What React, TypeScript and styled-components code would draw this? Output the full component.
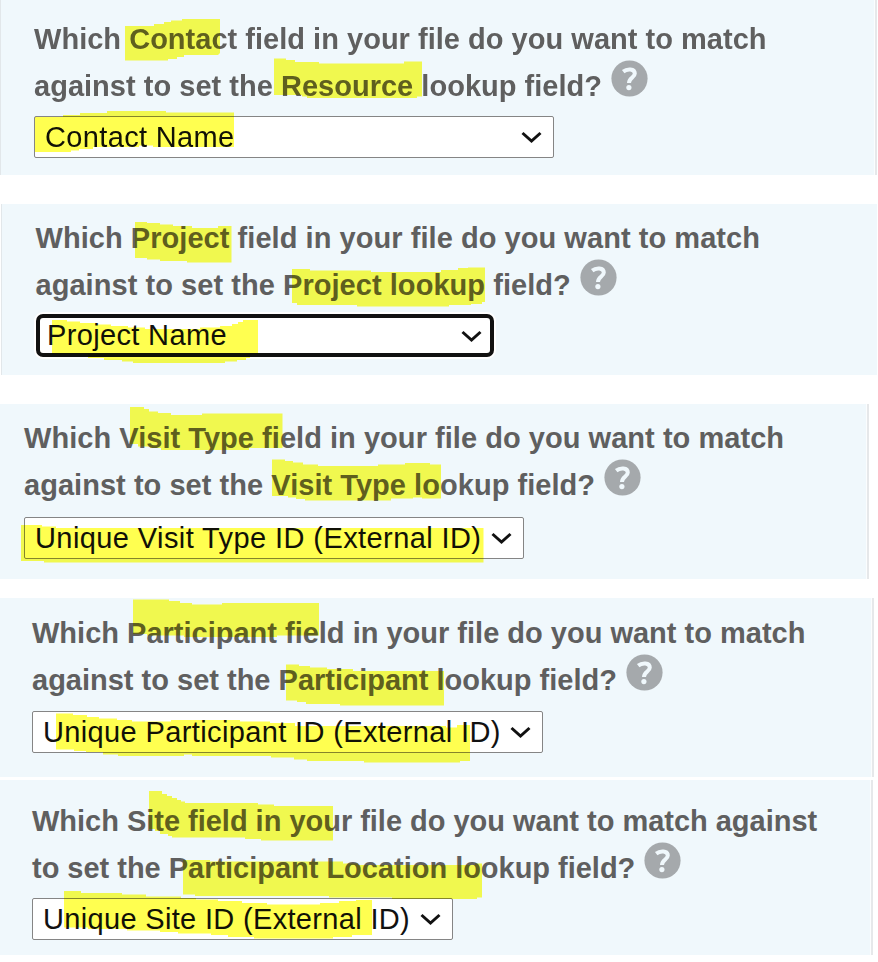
import React from "react";
import styled, { createGlobalStyle } from "styled-components";

const GlobalStyle = createGlobalStyle`
  body {
    margin: 0;
    background: #fff;
    font-family: "Liberation Sans", Arial, Helvetica, sans-serif;
  }
`;

const Page = styled.main`
  display: flex;
  flex-direction: column;
  align-items: flex-start;
  width: 878px;
  height: 962px;
  overflow: hidden;
`;

const Panel = styled.section<{
  $width: number;
  $height: number;
  $before: number;
  $inset: number;
  $top: number;
  $left: number;
  $leftLine: boolean;
  $rightLine: boolean;
}>`
  position: relative;
  box-sizing: border-box;
  flex: none;
  display: flex;
  flex-direction: column;
  align-items: flex-start;
  width: ${(p) => p.$width}px;
  height: ${(p) => p.$height}px;
  margin: ${(p) => p.$before}px 0 0 ${(p) => p.$inset}px;
  padding: ${(p) => p.$top}px 0 0 ${(p) => p.$left}px;
  background: #f0f8fc;
  box-shadow:
    ${(p) => (p.$leftLine ? "inset 1px 0 #e2e7ea" : "inset 0 0 transparent")},
    ${(p) =>
      p.$rightLine
        ? "inset -2px 0 #e6e8ea, inset -3px 0 #fbfdfe"
        : "inset 0 0 transparent"};
`;

const Question = styled.div<{ $spacing: number }>`
  color: #5f5f5f;
  font-size: 29px;
  font-weight: 700;
  line-height: 47px;
  letter-spacing: ${(p) => p.$spacing}px;
`;

const Line = styled.div`
  display: flex;
  height: 47px;
  white-space: pre;
`;

const HelpIcon = styled.svg`
  flex: none;
  width: 37px;
  height: 37px;
  margin: -3px 0 0 9px;
`;

const SelectBox = styled.button<{
  $width: number;
  $height: number;
  $top: number;
  $focused: boolean;
}>`
  box-sizing: border-box;
  display: flex;
  align-items: center;
  justify-content: space-between;
  width: ${(p) => p.$width}px;
  height: ${(p) => p.$height}px;
  margin: ${(p) => p.$top}px 0 0;
  padding: ${(p) => (p.$focused ? "0 8px 1px 7.5px" : "0 11px 1px 10px")};
  border: ${(p) => (p.$focused ? "4px solid #111" : "1.5px solid #858585")};
  border-radius: ${(p) => (p.$focused ? 7 : 2)}px;
  box-shadow: ${(p) => (p.$focused ? "0 0 0 2px #fff" : "none")};
  background: #fff;
  color: #111;
  font-family: inherit;
  font-size: 29px;
  line-height: 34px;
  white-space: pre;
`;

const Value = styled.span<{ $spacing: number }>`
  letter-spacing: ${(p) => p.$spacing}px;
`;

const Chevron = styled.svg`
  flex: none;
  width: 21px;
  height: 13px;
  margin-top: 2px;
`;

const Marker = styled.svg`
  position: absolute;
  inset: 0;
  width: 100%;
  height: 100%;
  overflow: visible;
  pointer-events: none;
  mix-blend-mode: multiply;
  fill: #ffff50;
`;

type Field = {
  y: number;
  x: number;
  width: number;
  height: number;
  before: number;
  top: number;
  left: number;
  leftLine: boolean;
  rightLine: boolean;
  lines: [string, string];
  lineSpacing: number;
  value: string;
  spacing: number;
  select: { width: number; height: number; top: number; focused: boolean };
  strokes: string[];
};

const fields: Field[] = [
  {
    x: 0, y: 0, width: 877, height: 175, before: 0, top: 16, left: 34,
    leftLine: true, rightLine: true,
    lines: [
      "Which Contact field in your file do you want to match",
      "against to set the Resource lookup field?",
    ],
    lineSpacing: 0.02,
    value: "Contact Name",
    spacing: 0.35,
    select: { width: 520, height: 42, top: 6, focused: false },
    strokes: [
      "125,26 154,26 154,24 164,24 164,22 171,22 171,20.5 182,20.5 182,19 220,19 220,53 218,55 184,55 184,57 177,57 177,59 168,59 168,60.5 125,60.5",
      "274,58.5 286,58.5 286,60 295,60 295,62 319,62 319,63.5 404,63.5 404,61.5 422,61.5 422,96.5 417,96.5 417,98 307,98 307,96.5 302,96.5 302,95 274,95",
      "35,117 63,117 63,115 80,115 80,113 107,113 107,111 166,111 166,112.5 234,112.5 234,147 153,147 153,145.5 139,145.5 139,147 93,147 93,149 79,149 79,150.5 71,150.5 71,152 35,152",
    ],
  },
  {
    x: 1, y: 204, width: 876, height: 171, before: 29, top: 11, left: 34.5,
    leftLine: true, rightLine: false,
    lines: [
      "Which Project field in your file do you want to match",
      "against to set the Project lookup field?",
    ],
    lineSpacing: 0.05,
    value: "Project Name",
    spacing: 0.35,
    select: { width: 458, height: 43, top: 5, focused: true },
    strokes: [
      "135,222 147,222 147,223 160,223 160,224.5 173,224.5 173,226 192,226 192,228 218,228 218,226 231.5,226 231.5,262.5 187,262.5 187,261 160,261 160,259.5 147,259.5 147,258 135,258",
      "292,269 310,269 310,270.5 371,270.5 371,272 441,272 441,270 458,270 458,268 468,268 468,267.5 485,267.5 485,302 482,302 482,304 471,304 471,305 449,305 449,306.5 357,306.5 357,305 297,305 297,303 292,303",
      "52,320 67,320 67,321.5 80,321.5 80,323 97,323 97,324.5 111,324.5 111,326 128,326 128,327.5 145,327.5 145,329 200,329 200,327.5 220,327.5 220,326 232,326 232,324 238,324 238,322 243,322 243,320 258,320 258,354 250,354 250,358 246,358 246,360 237,360 237,361.5 225,361.5 225,363 133,363 133,361.5 122,361.5 122,360 104,360 104,358 88,358 88,354 52,354",
    ],
  },
  {
    x: 0, y: 404, width: 869, height: 175, before: 29, top: 11, left: 24,
    leftLine: false, rightLine: true,
    lines: [
      "Which Visit Type field in your file do you want to match",
      "against to set the Visit Type lookup field?",
    ],
    lineSpacing: 0.04,
    value: "Unique Visit Type ID (External ID)",
    spacing: 0.41,
    select: { width: 500, height: 42, top: 8, focused: false },
    strokes: [
      "130,407 144,407 144,409 149,409 149,411.5 158,411.5 158,413 171,413 171,415 202,415 202,413.5 282.5,413.5 282.5,448 249,448 249,450 161,450 161,448 150,448 150,446.5 138,446.5 138,444 130,444",
      "272,459.5 285,459.5 285,461 293,461 293,462.5 303,462.5 303,464.5 318,464.5 318,466 378,466 378,464.5 405,464.5 405,463 430,463 430,464.5 441,464.5 441,498.5 422,498.5 422,497.5 413,497.5 413,498.5 391,498.5 391,500.5 305,500.5 305,499 296,499 296,497.5 288,497.5 288,496 272,496",
      "21,525 42,525 42,526.5 56,526.5 56,528 483.5,528 483.5,562.5 44,562.5 44,561 21,561",
    ],
  },
  {
    x: 0, y: 598, width: 874, height: 179, before: 19, top: 12, left: 32,
    leftLine: false, rightLine: true,
    lines: [
      "Which Participant field in your file do you want to match",
      "against to set the Participant lookup field?",
    ],
    lineSpacing: 0,
    value: "Unique Participant ID (External ID)",
    spacing: 0.37,
    select: { width: 511, height: 42, top: 7, focused: false },
    strokes: [
      "133,599.5 169,599.5 169,601 180,601 180,603 192,603 192,604.5 222,604.5 222,603 319,603 319,635.5 277,635.5 277,637 184,637 184,635.5 147,635.5 147,634 133,634",
      "286,664.5 299,664.5 299,666 310,666 310,667.5 327,667.5 327,669 353,669 353,671 444,671 444,705.5 340,705.5 340,704 306,704 306,702 297,702 297,700.5 286,700.5",
      "56,713.5 73,713.5 73,715 87,715 87,717 99,717 99,718.5 117,718.5 117,720 132,720 132,721.5 171,721.5 171,720 240,720 240,721.5 270,721.5 270,723 295,723 295,726 446,726 446,727.5 457,727.5 457,725 470,725 470,761 460,761 460,762.5 364,762.5 364,761 307,761 307,759.5 294,759.5 294,757.5 271,757.5 271,756 192,756 192,754.5 184,754.5 184,756 118,756 118,754.5 103,754.5 103,752 86,752 86,751 74,751 74,749.5 56,749.5",
    ],
  },
  {
    x: 0, y: 780, width: 873, height: 175, before: 3, top: 18, left: 32,
    leftLine: false, rightLine: true,
    lines: [
      "Which Site field in your file do you want to match against",
      "to set the Participant Location lookup field?",
    ],
    lineSpacing: -0.02,
    value: "Unique Site ID (External ID)",
    spacing: 0.33,
    select: { width: 421, height: 42, top: 6, focused: false },
    strokes: [
      "149,791 162,791 162,794 167,794 167,796 172,796 172,798 177,798 177,800 181,800 181,801.5 185,801.5 185,803 258,803 258,804.5 274,804.5 274,806 333,806 333,840.5 261,840.5 261,839 245,839 245,837.5 172,837.5 172,836 168,836 168,834 160,834 160,831 155,831 155,829 149,829",
      "183,860 210,860 210,861.5 343,861.5 343,863.5 358,863.5 358,865 475,865 475,863.5 482,863.5 482,897.5 477,897.5 477,899 392,899 392,897.5 329,897.5 329,896 195,896 195,894.5 183,894.5",
      "64,891 81,891 81,893 122,893 122,894.5 146,894.5 146,896.5 181,896.5 181,898 196,898 196,899.5 218,899.5 218,901 242,901 242,903 267,903 267,904.5 320,904.5 320,903 339,903 339,901 356,901 356,900 372,900 372,935 352,935 352,937 333,937 333,938.5 254,938.5 254,937 228,937 228,935 211,935 211,933.5 178,933.5 178,932 160,932 160,930.5 127,930.5 127,929 88,929 88,927.5 64,927.5",
    ],
  },
];

function Help() {
  return (
    <HelpIcon viewBox="0 0 37 37" role="img" aria-label="Help">
      <circle cx="18.5" cy="18.5" r="18.1" fill="#a5a9ac" />
      <path
        d="M12.2 11.6 C16 8.6 23.8 8.4 23.8 13.6 C23.8 17.6 18.2 17.6 18 23"
        fill="none"
        stroke="#f0f8fc"
        strokeWidth="4"
      />
      <circle cx="17.9" cy="27.6" r="2.6" fill="#f0f8fc" />
    </HelpIcon>
  );
}

function LookupField({ field }: { field: Field }) {
  const { select } = field;
  return (
    <Panel
      $width={field.width}
      $height={field.height}
      $before={field.before}
      $inset={field.x}
      $top={field.top}
      $left={field.left}
      $leftLine={field.leftLine}
      $rightLine={field.rightLine}
    >
      <Question $spacing={field.lineSpacing}>
        <Line>{field.lines[0]}</Line>
        <Line>
          {field.lines[1]}
          <Help />
        </Line>
      </Question>
      <SelectBox
        type="button"
        $width={select.width}
        $height={select.height}
        $top={select.top}
        $focused={select.focused}
      >
        <Value $spacing={field.spacing}>{field.value}</Value>
        <Chevron viewBox="0 0 21 13">
          <path d="M1.5 2 L10.5 10 L19.5 2" fill="none" stroke="#111" strokeWidth="3" />
        </Chevron>
      </SelectBox>
      <Marker viewBox={`${field.x} ${field.y} ${field.width} ${field.height}`}>
        {field.strokes.map((points) => (
          <polygon key={points} points={points} />
        ))}
      </Marker>
    </Panel>
  );
}

export default function App() {
  return (
    <>
      <GlobalStyle />
      <Page>
        {fields.map((field) => (
          <LookupField key={field.value} field={field} />
        ))}
      </Page>
    </>
  );
}
